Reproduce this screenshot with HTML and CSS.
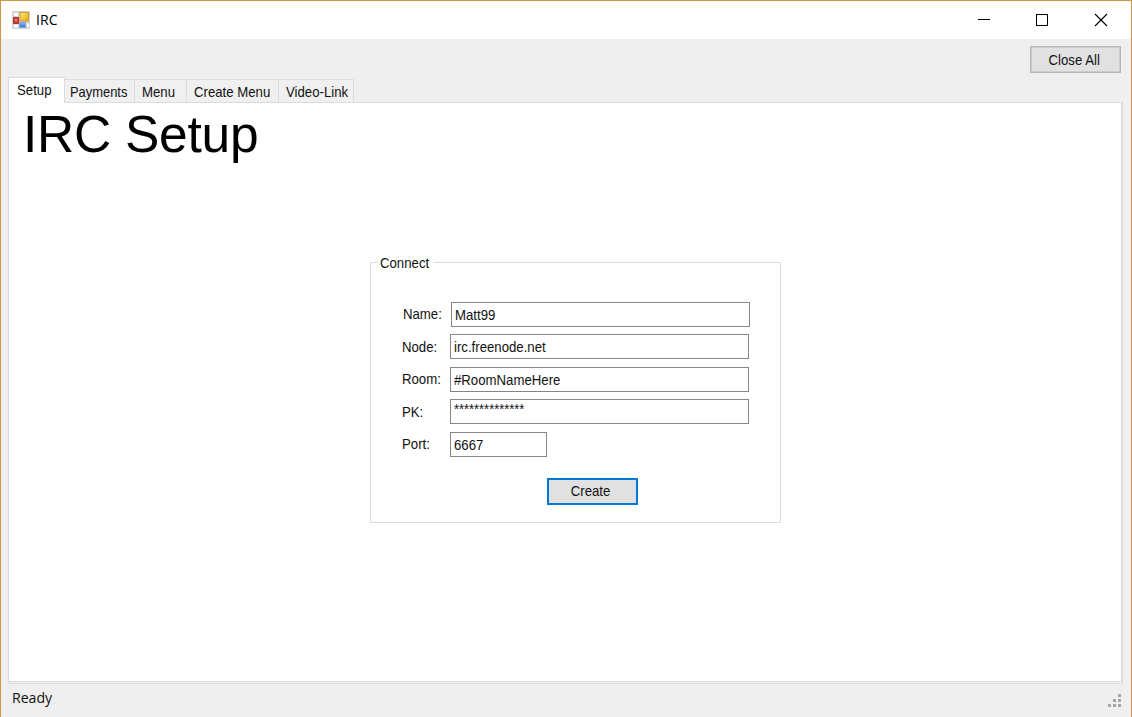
FILE: index.html
```html
<!DOCTYPE html>
<html lang="en">
<head>
<meta charset="utf-8">
<title>IRC</title>
<link rel="stylesheet" href="styles.css">
</head>
<body>
<div class="window">
  <header class="titlebar">
    <svg class="app-icon" width="18" height="18" viewBox="0 0 18 18">
      <defs>
        <linearGradient id="gold" x1="0" y1="0" x2="1" y2="1"><stop offset="0" stop-color="#ffe98a"/><stop offset="1" stop-color="#e9a900"/></linearGradient>
        <linearGradient id="blue" x1="0" y1="0" x2="0" y2="1"><stop offset="0" stop-color="#8fb8f5"/><stop offset="1" stop-color="#2f6fd8"/></linearGradient>
      </defs>
      <rect width="18" height="18" rx="1" fill="#d3d3d3"/>
      <path d="M2 2h4v3H2zM2 13.500h4v3H2zM15 12.500h2v3.500h-2z" fill="#fff"/>
      <rect x="8" y="1.500" width="8.500" height="8.500" fill="url(#gold)" stroke="#c99a2c"/>
      <rect x="1.500" y="6.500" width="5" height="6" fill="#cf3a34" stroke="#b03a35"/>
      <rect x="3" y="8" width="2" height="2" fill="#e88b80"/>
      <rect x="7.500" y="11.500" width="6" height="5" fill="url(#blue)" stroke="#7fa8e4"/>
    </svg>
    <span class="title"><span class="ui">IRC</span></span>
    <svg class="controls" width="140" height="20" viewBox="0 0 140 20" fill="none" stroke="#000">
      <path d="M6 9.500h12" shape-rendering="crispEdges"/>
      <rect x="64.500" y="4.500" width="11" height="11" shape-rendering="crispEdges"/>
      <path d="M123 4l12 12M135 4l-12 12" stroke-width="1.100"/>
    </svg>
  </header>
  <div class="toolbar">
    <button class="button"><span class="ms">Close All</span></button>
  </div>
  <nav class="tabs">
    <div class="tab active"><span class="ms">Setup</span></div>
    <div class="tab payments"><span class="ms">Payments</span></div>
    <div class="tab menu"><span class="ms">Menu</span></div>
    <div class="tab create"><span class="ms">Create Menu</span></div>
    <div class="tab video"><span class="ms">Video-Link</span></div>
  </nav>
  <main class="page">
    <h1>IRC Setup</h1>
    <fieldset class="group">
      <legend><span class="ms">Connect</span></legend>
      <div class="row first"><label><span class="ms">Name:</span></label><div class="field"><span class="ms">Matt99</span></div></div>
      <div class="row"><label><span class="ms">Node:</span></label><div class="field"><span class="ms">irc.freenode.net</span></div></div>
      <div class="row"><label><span class="ms">Room:</span></label><div class="field"><span class="ms">#RoomNameHere</span></div></div>
      <div class="row"><label><span class="ms">PK:</span></label><div class="field secret"><span class="ms">**************</span></div></div>
      <div class="row"><label><span class="ms">Port:</span></label><div class="field short"><span class="ms">6667</span></div></div>
      <button class="button primary"><span class="ms">Create</span></button>
    </fieldset>
  </main>
  <footer class="status">
    <span class="ui">Ready</span>
    <svg class="grip" width="14" height="14" viewBox="0 0 14 14" fill="#a6a6a6">
      <path d="M10 0h3v3h-3zM5 5h3v3H5zM10 5h3v3h-3zM0 10h3v3H0zM5 10h3v3H5zM10 10h3v3h-3z"/>
    </svg>
  </footer>
</div>
</body>
</html>
```
FILE: styles.css
```css
* { box-sizing: border-box; }
body { margin: 0; overflow: hidden; }
.window {
  width: 1132px; height: 717px;
  display: flex; flex-direction: column;
  background: #efefef;
  border: 1px solid #d59549; border-bottom: 0;
  font: 15px/18px "Liberation Sans", Arial, sans-serif;
  color: #111;
}
.ms { display: inline-block; transform: scaleX(.88); transform-origin: left; white-space: pre; }
.ui { display: inline-block; font: 15px/18px "Open Sans", sans-serif; transform: scaleX(.94); transform-origin: left; }
.titlebar { height: 38px; background: #fff; display: flex; align-items: center; padding: 0 19px 0 11px; }
.title { margin: -2px 0 0 6px; color: #000; }
.controls { margin-left: auto; }
.toolbar { height: 38px; display: flex; justify-content: flex-end; padding: 7px 10px 0 0; }
.button {
  width: 91px; height: 27px; padding: 0 2px 0 0;
  font: inherit; color: #111;
  background: #e1e1e1; border: 1px solid #b5b5b5;
  box-shadow: inset 0 0 0 1px #cdcdcd;
}
.button .ms { transform-origin: center; }
.tabs { height: 25px; display: flex; align-items: flex-end; padding-left: 7px; }
.tab { height: 23px; border: 1px solid #dcdcdc; border-width: 1px 1px 0 0; padding: 3px 0 0 5px; background: #f0f0f0; }
.tab.active { width: 57px; height: 26px; margin-bottom: -1px; padding: 3px 0 0 8px; border-left-width: 1px; background: #fff; position: relative; }
.payments { width: 70px; }
.payments .ms { transform: scaleX(.86); }
.menu { width: 52px; padding-left: 7px; }
.create { width: 92px; padding-left: 7px; }
.video { width: 75px; padding-left: 7px; }
.page { width: 1115px; height: 580px; margin-left: 7px; background: #fff; border: 1px solid #dcdcdc; border-right-width: 2px; }
h1 { margin: 1px 0 0 14px; font-size: 51.500px; line-height: 60px; font-weight: 400; color: #000; letter-spacing: -.25px; }
.group { width: 411px; height: 270px; margin: 89px 0 0 361px; padding: 0 0 0 31px; border: 1px solid #dcdcdc; min-width: 0; }
legend { width: 56px; height: 18px; padding: 1px 0 0 2px; margin-left: -24px; }
.row { display: flex; align-items: center; height: 25px; margin-bottom: 7.500px; }
.first { margin-top: 30.500px; padding-left: 1px; }
label { width: 48px; }
.field { width: 299px; height: 25px; border: 1px solid #858585; padding: 3px 0 0 3px; line-height: 18px; background: #fff; }
.row:not(.first) .field { padding-left: 2.500px; }
.row .short { width: 97px; }
.row .secret { padding-top: 0; }
.secret .ms { transform: scaleX(.86); }
.primary { display: block; margin: 21px 0 0 145px; padding-right: 4px; border: 2px solid #0078d7; box-shadow: none; }
.status { flex: 1; display: flex; justify-content: space-between; align-items: flex-start; border-top: 1px solid #dcdcdc; margin: 1px 8px 0 7px; padding: 4px 0 0 4px; }
.grip { margin-top: 6px; margin-right: 1px; }
```
